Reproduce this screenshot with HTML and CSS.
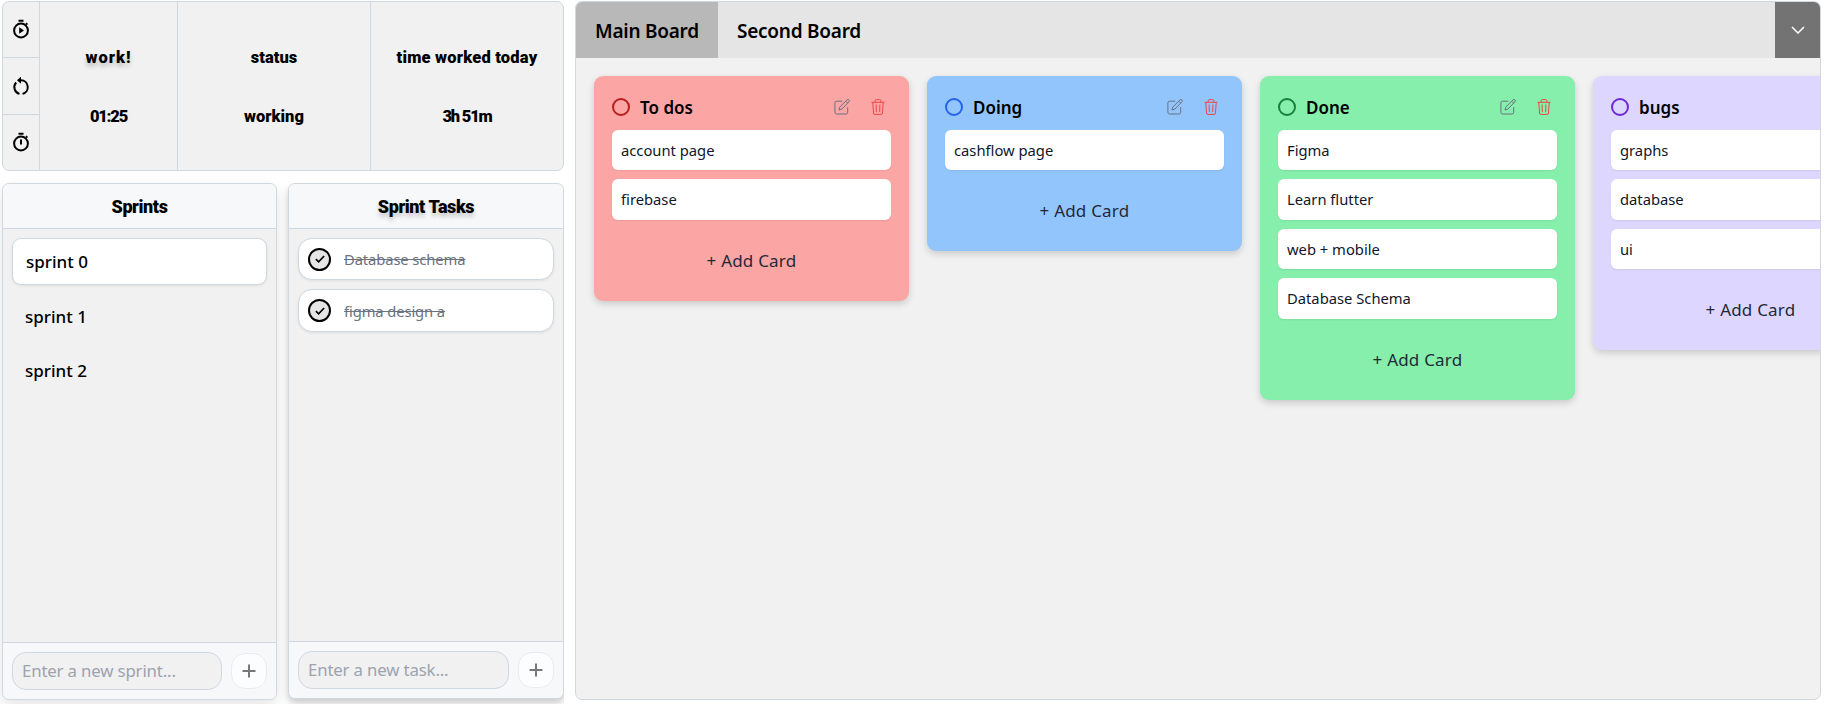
FILE: index.html
```html
<!DOCTYPE html>
<html lang="en">
<head>
<meta charset="utf-8">
<title>Sprint board</title>
<link rel="stylesheet" href="styles.css">
</head>
<body>
<svg class="defs" width="0" height="0" aria-hidden="true">
  <symbol id="edit" viewBox="0 0 16 16"><path d="M8.2 2.2H2.6a1.7 1.7 0 0 0-1.7 1.7v9.4A1.7 1.7 0 0 0 2.600 15h9.400a1.700 1.700 0 0 0 1.700-1.700V8.200M5 11l.8-3L13 .9a1.250 1.250 0 0 1 1.900 0 1.250 1.250 0 0 1 0 1.900L7.900 10.100zM11.700 2.200l2 2"/></symbol>
  <symbol id="trash" viewBox="0 0 16 16"><path d="M1.500 3.300h13M5.200 3.300V1.700A1.200 1.200 0 0 1 6.400.6h3.200a1.200 1.200 0 0 1 1.200 1.100v1.600M2.800 3.500l.7 10.400a1.500 1.500 0 0 0 1.500 1.500h6a1.500 1.500 0 0 0 1.500-1.500l.7-10.400M6.100 5.500l.2 7.600M9.900 5.500l-.2 7.600"/></symbol>
  <symbol id="check" viewBox="0 0 24 24"><path d="M7.500 12.200l3 3 6-6.500"/></symbol>
  <symbol id="plus" viewBox="0 0 16 16"><path d="M8 1.500v13M1.500 8h13"/></symbol>
</svg>
<div class="app">
  <div class="side">
    <section class="timer">
      <div class="controls">
        <button class="control"><svg width="18" height="20" viewBox="0 0 18 20"><circle cx="9" cy="11.500" r="6.900"/><path d="M6.500 1.800h5M14 5.500l1.300-1.300"/><path class="solid" d="M7.200 8.200v6.600l4.800-3.300z"/></svg></button>
        <button class="control"><svg width="18" height="20" viewBox="0 0 18 20"><path d="M7.500 17.900A6.900 6.900 0 0 1 4.200 6.500M10.500 17.900A6.900 6.900 0 0 0 9 4.300H6"/><path class="solid" d="M9 .8v7L5 4.300z"/></svg></button>
        <button class="control"><svg width="18" height="20" viewBox="0 0 18 20"><circle cx="9" cy="11.500" r="6.900"/><path d="M6.500 1.800h5M14 5.500l1.300-1.300M9 7.500v5"/></svg></button>
      </div>
      <div class="stat stat-work"><span class="label shadowed">work!</span><span class="time">01:25</span></div>
      <div class="stat stat-status"><span>status</span><span>working</span></div>
      <div class="stat stat-today"><span class="caption">time worked today</span><span class="time">3h 51m</span></div>
    </section>
    <div class="panels">
      <section class="panel sprints">
        <h2>Sprints</h2>
        <div class="list">
          <div class="sprint active">sprint 0</div>
          <div class="sprint">sprint 1</div>
          <div class="sprint">sprint 2</div>
        </div>
        <div class="entry"><div class="field">Enter a new sprint...</div><button class="add"><svg width="16" height="16"><use href="#plus"/></svg></button></div>
      </section>
      <section class="panel tasks">
        <h2 class="shadowed">Sprint Tasks</h2>
        <div class="list">
          <div class="task"><span class="tick"><svg width="22" height="22"><use href="#check"/></svg></span><s>Database schema</s></div>
          <div class="task"><span class="tick"><svg width="22" height="22"><use href="#check"/></svg></span><s>figma design a</s></div>
        </div>
        <div class="entry"><div class="field">Enter a new task...</div><button class="add"><svg width="16" height="16"><use href="#plus"/></svg></button></div>
      </section>
    </div>
  </div>
  <main class="board">
    <nav class="tabs">
      <div class="tab selected"><span>Main Board</span></div>
      <div class="tab"><span>Second Board</span></div>
      <button class="more"><svg width="14" height="8" viewBox="0 0 14 8"><path d="M1 1l6 6 6-6"/></svg></button>
    </nav>
    <div class="columns">
      <section class="column red">
        <header><i class="ring"></i><h3>To dos</h3><svg class="edit" width="16" height="16"><use href="#edit"/></svg><svg class="trash" width="16" height="16"><use href="#trash"/></svg></header>
        <div class="card"><span>account page</span></div><div class="card"><span>firebase</span></div>
        <button class="add-card"><span>+ Add Card</span></button>
      </section>
      <section class="column blue">
        <header><i class="ring"></i><h3>Doing</h3><svg class="edit" width="16" height="16"><use href="#edit"/></svg><svg class="trash" width="16" height="16"><use href="#trash"/></svg></header>
        <div class="card"><span>cashflow page</span></div>
        <button class="add-card"><span>+ Add Card</span></button>
      </section>
      <section class="column green">
        <header><i class="ring"></i><h3>Done</h3><svg class="edit" width="16" height="16"><use href="#edit"/></svg><svg class="trash" width="16" height="16"><use href="#trash"/></svg></header>
        <div class="card"><span>Figma</span></div><div class="card"><span>Learn flutter</span></div><div class="card"><span>web + mobile</span></div><div class="card"><span>Database Schema</span></div>
        <button class="add-card"><span>+ Add Card</span></button>
      </section>
      <section class="column violet">
        <header><i class="ring"></i><h3>bugs</h3><svg class="edit" width="16" height="16"><use href="#edit"/></svg><svg class="trash" width="16" height="16"><use href="#trash"/></svg></header>
        <div class="card"><span>graphs</span></div><div class="card"><span>database</span></div><div class="card"><span>ui</span></div>
        <button class="add-card"><span>+ Add Card</span></button>
      </section>
    </div>
  </main>
</div>
</body>
</html>
```

FILE: styles.css
```css
* { box-sizing: border-box; }
body { margin: 0; background: #fff; color: #000; font-family: "Noto Sans", "Open Sans", sans-serif; }
button { padding: 0; border: 0; background: none; font: inherit; color: inherit; }
h2, h3 { margin: 0; }
svg { display: block; fill: none; stroke: currentColor; }
.defs { position: absolute; }

.app { display: flex; gap: 11px; height: 704px; padding: 1px 4px 4px 2px; overflow: hidden; }
.side { width: 562px; display: flex; flex-direction: column; gap: 12px; }

.timer { display: flex; height: 170px; border: 1px solid #cfd8e1; border-radius: 7px; background: #f1f1f1; }
.controls { width: 37px; display: grid; grid-template-rows: 56px 57px 55px; border-right: 1px solid #cfd8e1; }
.control { display: grid; place-items: center; padding-bottom: 2px; border-bottom: 1px solid #cfd8e1; }
.control:nth-child(2) { padding-bottom: 0; }
.control:last-child { border-bottom: 0; }
.control svg { stroke-width: 2; }
.solid { fill: currentColor; stroke: none; }
.stat { display: flex; flex-direction: column; align-items: center; padding-top: 41px; gap: 29px; font: 900 16.500px/30px Roboto, sans-serif; white-space: nowrap; }
.stat-work { width: 138px; border-right: 1px solid #cfd8e1; }
.stat-status { width: 193px; border-right: 1px solid #cfd8e1; }
.stat-today { flex: 1; }
.label { letter-spacing: 1px; }
.caption { letter-spacing: .2px; }
.time { letter-spacing: -1.200px; }
.shadowed { text-shadow: 0 4px 4px rgba(0, 0, 0, .2); }

.panels { flex: 1; display: flex; gap: 11px; align-items: flex-start; }
.panel { display: flex; flex-direction: column; border: 1px solid #cfd8e1; border-radius: 7px; background: #f1f1f1; overflow: hidden; box-shadow: 0 5px 14px rgba(0, 0, 0, .11); }
.sprints { width: 275px; height: 517px; }
.tasks { width: 276px; height: 516px; box-shadow: 0 4px 6px rgba(0, 0, 0, .16), 0 5px 14px rgba(0, 0, 0, .06); clip-path: inset(0 0 -20px -20px); }
.panel h2 { height: 45px; border-bottom: 1px solid #cfd8e1; background: #f7f8fa; font: 900 18px/45px Roboto, sans-serif; letter-spacing: -.4px; text-align: center; }
.list { flex: 1; padding: 9px; }
.sprint { height: 47px; margin-bottom: 7px; padding-left: 13px; font-size: 17px; line-height: 46px; font-weight: 500; }
.sprint.active { margin-bottom: 9px; border: 1px solid #cfd8e1; border-radius: 9px; background: #fff; box-shadow: 0 1px 3px rgba(0, 0, 0, .08); }
.task { display: flex; align-items: center; gap: 13px; height: 42px; margin-bottom: 9px; padding-left: 9px; border: 1px solid #cfd8e1; border-radius: 14px; background: #fff; box-shadow: 0 1px 3px rgba(0, 0, 0, .08); color: #6b7280; font-size: 14.750px; letter-spacing: -.1px; }
.task + .task { height: 43px; }
.tick { display: grid; place-content: center; width: 23px; height: 23px; border: 2px solid #000; border-radius: 50%; background: #e5e5e5; color: #000; }
.tick svg { stroke-width: 1.800; }
.entry { display: flex; align-items: center; gap: 9px; height: 57px; padding: 0 9px; border-top: 1px solid #cfd8e1; background: #f7f8fa; }
.field { flex: 1; height: 38px; padding-left: 9px; border: 1px solid #cfd8e1; border-radius: 14px; background: #f1f1f1; color: #9ca3af; font-size: 16.800px; letter-spacing: -.15px; line-height: 36px; white-space: nowrap; }
.add { display: grid; place-items: center; width: 36px; height: 36px; border: 1px solid #e9ebee; border-radius: 14px; background: #fcfdfe; color: #777; }
.add svg { stroke-width: 2; }

.board { width: 1246px; height: 699px; border: 1px solid #cfd8e1; border-radius: 7px; background: #f1f1f1; overflow: hidden; }
.tabs { display: flex; height: 56px; background: #e5e5e5; font-size: 19px; font-weight: 600; letter-spacing: -.25px; line-height: 58px; }
.tab { padding: 0 19px; white-space: nowrap; }
.tab.selected { width: 142px; background: #b8b8b8; }
.more { display: grid; place-items: center; width: 45px; margin-left: auto; background: #737373; color: #fff; }
.more svg { stroke-width: 1.500; }
.columns { display: flex; align-items: flex-start; gap: 18px; padding: 18px; }
.column { flex: 0 0 315px; padding: 18px 18px 0; border-radius: 9px; box-shadow: 0 3px 7px rgba(0, 0, 0, .16); }
.column header { display: flex; align-items: center; height: 26px; margin-bottom: 10px; }
.ring { width: 18px; height: 18px; border: 2px solid; border-radius: 50%; }
.column h3 { flex: 1; margin-left: 10px; padding-top: 2px; font-size: 17px; font-weight: 600; line-height: 26px; }
.edit { margin-right: 20px; color: #6b7280; }
.trash { margin-right: 5px; color: #ef4444; }
.red { background: #fca5a5; } .red .ring { color: #b91c1c; }
.blue { background: #93c5fd; } .blue .ring { color: #2563eb; }
.green { background: #86efac; } .green .ring { color: #15803d; }
.violet { background: #ddd6fe; } .violet .ring { color: #6d28d9; }
.card { height: 40.400px; margin-bottom: 9px; padding-left: 9px; border-radius: 6px; background: #fff; box-shadow: 0 1px 2px rgba(0, 0, 0, .07); color: #0f172a; font-size: 14.750px; line-height: 41px; }
.add-card { display: block; width: 100%; height: 72px; padding-bottom: 9px; color: #1f2937; font-size: 17px; letter-spacing: .2px; line-height: 63px; text-align: center; }
```
